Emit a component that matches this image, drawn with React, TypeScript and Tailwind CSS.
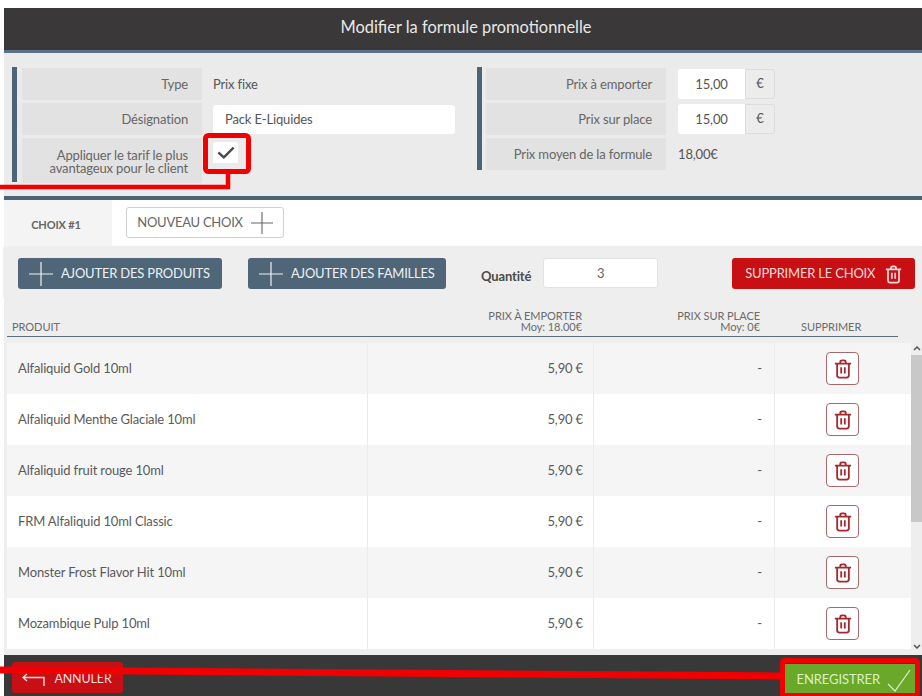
const products = [
  "Alfaliquid Gold 10ml",
  "Alfaliquid Menthe Glaciale 10ml",
  "Alfaliquid fruit rouge 10ml",
  "FRM Alfaliquid 10ml Classic",
  "Monster Frost Flavor Hit 10ml",
  "Mozambique Pulp 10ml",
];

function Plus({ className }: { className?: string }) {
  return (
    <svg viewBox="0 0 24 24" className={className} fill="none" stroke="currentColor" strokeWidth="1.2">
      <path d="M0 12H24M12 0V24" />
    </svg>
  );
}

function Trash({ className }: { className?: string }) {
  return (
    <svg viewBox="0 0 20 22" className={className} fill="none" stroke="currentColor" strokeWidth="2">
      <path d="M1 5H19M7 5V3C7 2 8 1.5 9 1.5H11C12 1.5 13 2 13 3V5" />
      <path d="M3.500 5V18C3.500 19.500 4.500 20.500 6 20.500H14C15.500 20.500 16.500 19.500 16.500 18V5" />
      <path d="M8 9V16M12 9V16" />
    </svg>
  );
}

function Label({ children, className }: { children: React.ReactNode; className?: string }) {
  return (
    <div className={`flex w-[180px] items-center justify-end bg-[#e2e2e2] pr-[14px] pt-[2px] text-right text-[13px] text-[#666] ${className ?? ""}`}>
      {children}
    </div>
  );
}

function PriceInput({ value }: { value: string }) {
  return (
    <div className="ml-3 flex h-[30px] text-[13px] text-[#555]">
      <div className="flex w-[67px] items-center justify-center rounded-l-[3px] bg-white pt-px">{value}</div>
      <div className="flex w-[30px] items-center justify-center rounded-r-[3px] border border-[#dcdcdc] bg-[#ececec]">€</div>
    </div>
  );
}

export default function App() {
  return (
    <div className="relative h-[696px] w-[922px] overflow-hidden bg-white pl-1 pt-2 font-['Lato',sans-serif] tracking-[-0.15px]">
      {/* Title */}
      <div className="flex h-[42px] items-center justify-center bg-[#3a3838] pb-[3px] pl-[6px] text-[16.4px] tracking-normal text-[#e8e8e8]">
        Modifier la formule promotionnelle
      </div>
      <div className="h-[3px] bg-[#5b7184]" />

      {/* Form */}
      <div className="flex h-[143px] bg-[#ebebeb] pl-2 pt-[14px]">
        <div className="flex h-[115px] w-[465px] border-l-[5px] border-[#4d6477] pl-[5px] pt-px">
          <div className="flex flex-col gap-[3px]">
            <div className="flex items-center">
              <Label className="h-[32px]">Type</Label>
              <span className="ml-[11px] pt-[2px] text-[13px] text-[#555]">Prix fixe</span>
            </div>
            <div className="flex items-center">
              <Label className="h-[32px]">Désignation</Label>
              <div className="ml-[11px] flex h-[29px] w-[242px] items-center rounded-[3px] bg-white pl-3 pt-px text-[13px] text-[#555]">
                Pack E-Liquides
              </div>
            </div>
            <div className="flex items-center">
              <Label className="h-[45px] leading-[13px]">
                <span>Appliquer le tarif le plus<br />avantageux pour le client</span>
              </Label>
              <div className="mb-[17px] ml-[11px] flex h-[21px] w-[25px] items-center justify-center rounded-t-[3px] bg-white">
                <svg viewBox="0 0 16 12" className="h-[13px] w-[18px]" fill="none" stroke="#4a4a4a" strokeWidth="2.200">
                  <path d="M1 6L6 10.500L15 1.500" />
                </svg>
              </div>
            </div>
          </div>
        </div>
        <div className="flex h-[103px] flex-col gap-[3px] border-l-[5px] border-[#4d6477] pl-1 pt-px">
          <div className="flex items-center">
            <Label className="h-[32px]">Prix à emporter</Label>
            <PriceInput value="15,00" />
          </div>
          <div className="flex items-center">
            <Label className="h-[32px]">Prix sur place</Label>
            <PriceInput value="15,00" />
          </div>
          <div className="flex items-center">
            <Label className="h-[32px]">Prix moyen de la formule</Label>
            <span className="ml-3 pt-[2px] text-[13px] text-[#555]">18,00€</span>
          </div>
        </div>
      </div>
      <div className="h-1 bg-[#4d6477]" />

      {/* Tabs */}
      <div className="flex h-[46px]">
        <div className="flex w-[108px] items-center justify-center bg-[#f4f4f4] pr-1 pt-[5px] text-[11px] font-bold text-[#666]">CHOIX #1</div>
        <div className="pl-[14px] pt-[7px]">
          <button className="flex h-[31px] w-[158px] items-center justify-center gap-2 rounded-[3px] border border-[#d0d0d0] bg-white pt-px text-[13px] tracking-[-0.25px] text-[#666]">
            NOUVEAU CHOIX
            <Plus className="h-[22px] w-[22px]" />
          </button>
        </div>
      </div>

      {/* Toolbar */}
      <div className="flex h-[51px] items-start bg-[#eeeeee] pl-[14px] pt-3 shadow-[0_1px_2px_#d4d4d4]">
        <button className="flex h-[31px] w-[204px] items-center gap-2 rounded-[3px] bg-[#4f6679] pl-[11px] pt-px text-[13px] tracking-[-0.2px] text-[#eef1f3]">
          <Plus className="h-[24px] w-[24px]" />
          AJOUTER DES PRODUITS
        </button>
        <button className="ml-[26px] flex h-[31px] w-[198px] items-center gap-2 rounded-[3px] bg-[#4f6679] pl-[11px] pt-px text-[13px] tracking-[-0.2px] text-[#eef1f3]">
          <Plus className="h-[24px] w-[24px]" />
          AJOUTER DES FAMILLES
        </button>
        <span className="ml-[35px] mt-[9px] text-[13px] font-bold text-[#4a4a4a]">Quantité</span>
        <div className="ml-3 flex h-[30px] w-[115px] items-center justify-center rounded-[3px] border border-[#e2e2e2] bg-white pt-0.5 text-[13px] text-[#666]">3</div>
        <button className="ml-[74px] flex h-[31px] w-[183px] items-center justify-center gap-[10px] rounded-[3px] bg-[#c80f14] pt-px text-[13px] tracking-[-0.2px] text-[#f5dcdc]">
          SUPPRIMER LE CHOIX
          <Trash className="h-[19px] w-[17px]" />
        </button>
      </div>

      {/* Table */}
      <div className="bg-[#eeeeee] pl-[3px]">
        <div className="flex h-[40px] w-[891px] items-end border-b-[1.5px] border-[#5d6d7b] pb-1 text-[11px] leading-[11px] tracking-[-0.05px] text-[#6b6b6b]">
          <div className="w-[361px] pl-[5px]">PRODUIT</div>
          <div className="w-[214px] text-right">PRIX À EMPORTER<br />Moy: 18.00€</div>
          <div className="w-[178px] text-right">PRIX SUR PLACE<br />Moy: 0€</div>
          <div className="flex-1 pl-[41px]">SUPPRIMER</div>
        </div>
        <div className="flex h-[318px] pt-[6px]">
          <div className="w-[904px]">
            {products.map((name, i) => (
              <div key={name} className={`flex h-[51px] items-center text-[13px] text-[#5a5a5a] ${i % 2 === 0 ? "bg-[#f5f5f5]" : "bg-white"}`}>
                <div className="flex h-full w-[361px] items-center border-r border-[#ebebeb] pl-[11px]">{name}</div>
                <div className="flex h-full w-[226px] items-center justify-end border-r border-[#ebebeb] pr-[10px]">5,90 €</div>
                <div className="flex h-full w-[181px] items-center justify-end border-r border-[#ebebeb] pr-3">-</div>
                <div className="flex flex-1 justify-center pr-px">
                  <div className="flex h-[33px] w-[33px] items-center justify-center rounded-[4px] border-[1.5px] border-[#a8686c] bg-white text-[#a5282e]">
                    <Trash className="h-[20px] w-[18px]" />
                  </div>
                </div>
              </div>
            ))}
          </div>
          {/* Scrollbar */}
          <div className="flex w-[11px] flex-col items-center">
            <svg viewBox="0 0 8 5" className="mt-[3px] h-[5px] w-2" fill="none" stroke="#555" strokeWidth="1.500">
              <path d="M1 4L4 1L7 4" />
            </svg>
            <div className="mt-1 h-[167px] w-full bg-[#c8c8c8]" />
            <svg viewBox="0 0 8 5" className="mt-[122px] h-[5px] w-2" fill="none" stroke="#555" strokeWidth="1.500">
              <path d="M1 1L4 4L7 1" />
            </svg>
          </div>
        </div>
      </div>

      {/* Footer */}
      <div className="flex h-[41px] items-end justify-between bg-[#383838] pb-[3px] pl-2 pr-[7px]">
        <button className="flex h-[31px] w-[111px] items-center justify-center gap-[8px] rounded-[3px] bg-[#c80f14] pr-px pt-1 text-[12.500px] text-[#f5dcdc]">
          <svg viewBox="0 0 24 14" className="h-[14px] w-[24px]" fill="none" stroke="currentColor" strokeWidth="1.400">
            <path d="M5 1L1 4.500L5 8M1 4.500H22V13" />
          </svg>
          ANNULER
        </button>
        <button className="flex h-[29px] w-[130px] items-center justify-end gap-[7px] bg-[#6aa82a] pr-1 pt-0.5 text-[13px] tracking-[-0.1px] text-[#dff0c4]">
          ENREGISTRER
          <svg viewBox="0 0 24 24" className="h-[24px] w-[24px]" fill="none" stroke="currentColor" strokeWidth="1.200">
            <path d="M1 16L8 23L23 2" />
          </svg>
        </button>
      </div>

      {/* Red annotations over the screenshot */}
      <svg className="pointer-events-none absolute left-0 top-0 h-[696px] w-[922px]" viewBox="0 0 922 696" fill="none" stroke="#f00000">
        <rect x="205.500" y="135.500" width="43" height="36" rx="3" strokeWidth="5" />
        <path d="M228 172V187H0" strokeWidth="4.500" />
        <path d="M0 670L782 676" strokeWidth="7" />
        <rect x="782.500" y="660.500" width="135" height="35" rx="2" strokeWidth="5" />
      </svg>
    </div>
  );
}
